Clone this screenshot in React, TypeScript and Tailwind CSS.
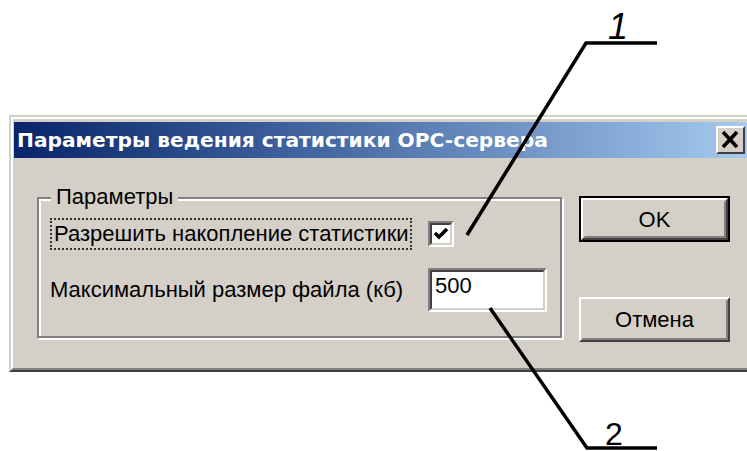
import { useState } from "react";

// Classic 3D edge helpers (raised / sunken), 2px per line
const raised =
  "border-2 border-t-white border-l-white border-b-[#404040] border-r-[#404040]";
const raisedInner =
  "border-2 border-t-[#D4D0C8] border-l-[#D4D0C8] border-b-[#808080] border-r-[#808080]";
const sunken =
  "border-2 border-t-[#808080] border-l-[#808080] border-b-white border-r-white";
const sunkenInner =
  "border-2 border-t-[#404040] border-l-[#404040] border-b-[#D4D0C8] border-r-[#D4D0C8]";

const Button = ({ label, isDefault }: { label: string; isDefault?: boolean }) => (
  <div className={isDefault ? "border-2 border-black" : ""}>
    <div className={raised}>
      <div
        className={`${raisedInner} flex items-center justify-center ${
          isDefault ? "h-[38px]" : "h-[41px]"
        } bg-[#D4D0C8] text-[22px] text-black`}
      >
        {label}
      </div>
    </div>
  </div>
);

const App = () => {
  const [checked, setChecked] = useState(true);
  const [size, setSize] = useState("500");

  return (
    <div className="relative h-[451px] w-[747px] overflow-hidden bg-white font-['Liberation_Sans',sans-serif]">
      <div className="pl-[9px] pt-[115px]">
        {/* dialog window */}
        <div className="w-[745px] border-2 border-t-[#D4D0C8] border-l-[#D4D0C8] border-b-[#404040] border-r-[#404040]">
          <div className="border-2 border-t-white border-l-white border-b-[#808080] border-r-[#808080] bg-[#D4D0C8] px-[1px] pt-[3px] pb-[1px]">
            {/* title bar */}
            <div className="flex h-[36px] items-center justify-between bg-gradient-to-r from-[#0A246A] to-[#A6CAF0] pl-[3px] pr-[4px]">
              <span className="font-['DejaVu_Sans',sans-serif] text-[20.2px] font-bold text-white">
                Параметры ведения статистики OPC-сервера
              </span>
              <div className="h-[28px] w-[29px] border-2 border-t-white border-l-white border-b-[#404040] border-r-[#404040] bg-[#D4D0C8]">
                <svg viewBox="0 0 25 24" className="h-full w-full">
                  <path d="M5 4 L19 19 M19 4 L5 19" stroke="#000" strokeWidth="3.6" />
                </svg>
              </div>
            </div>

            {/* body */}
            <div className="flex h-[209px] pl-[23px] pt-[39px]">
              {/* group box */}
              <div className="relative h-[141px] w-[525px] border-2 border-[#808080] shadow-[inset_2px_2px_0_#fff,2px_2px_0_#fff]">
                <span className="absolute left-[12px] top-[-16px] bg-[#D4D0C8] px-[5px] text-[22px] leading-[28px] text-black">
                  Параметры
                </span>
                <div className="flex flex-col pl-[11px] pt-[19px]">
                  <div className="flex items-center">
                    <label
                      className="w-[362px] cursor-default whitespace-nowrap border-2 border-dotted border-[#333] pl-[2px] text-[22px] leading-[28px] text-black"
                      onClick={() => setChecked(!checked)}
                    >
                      Разрешить накопление статистики
                    </label>
                    <div
                      className={`ml-[16px] h-[26px] w-[26px] ${sunken}`}
                      onClick={() => setChecked(!checked)}
                    >
                      <div className={`h-full w-full bg-white ${sunkenInner}`}>
                        {checked && (
                          <svg viewBox="0 0 18 18" className="h-full w-full">
                            <path
                              d="M3 8 L7 12 L15 4"
                              fill="none"
                              stroke="#000"
                              strokeWidth="3.6"
                            />
                          </svg>
                        )}
                      </div>
                    </div>
                  </div>
                  <div className="mt-[18px] flex items-center">
                    <span className="w-[378px] whitespace-nowrap text-[22px] leading-[28px] text-black">
                      Максимальный размер файла (кб)
                    </span>
                    <div className={`h-[44px] w-[119px] ${sunken}`}>
                      <input
                        value={size}
                        onChange={(e) => setSize(e.target.value)}
                        className={`h-full w-full bg-white pl-[3px] pb-[8px] text-[22px] text-black outline-none ${sunkenInner}`}
                      />
                    </div>
                  </div>
                </div>
              </div>

              {/* buttons */}
              <div className="ml-[17px] flex w-[151px] flex-col">
                <div className="-mt-[1px]">
                  <Button label="OK" isDefault />
                </div>
                <div className="mt-[55px]">
                  <Button label="Отмена" />
                </div>
              </div>
            </div>
          </div>
        </div>
      </div>

      {/* callout leaders */}
      <svg
        className="pointer-events-none absolute inset-0"
        width="747"
        height="451"
        viewBox="0 0 747 451"
      >
        <polyline
          points="467,235 586,43 657,43"
          fill="none"
          stroke="#000"
          strokeWidth="3.5"
        />
        <polyline
          points="490,308 587,448 657,448"
          fill="none"
          stroke="#000"
          strokeWidth="3.5"
        />
        <text
          x="608"
          y="39"
          fontSize="36"
          fontStyle="italic"
          fontFamily="Liberation Sans, sans-serif"
        >
          1
        </text>
        <text x="605" y="445" fontSize="32" fontFamily="Liberation Sans, sans-serif">
          2
        </text>
      </svg>
    </div>
  );
};

export default App;
